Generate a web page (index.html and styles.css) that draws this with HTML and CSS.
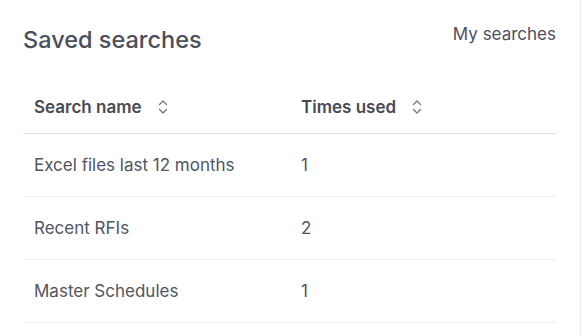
FILE: index.html
```html
<!DOCTYPE html>
<html lang="en">
<head>
<meta charset="utf-8">
<link rel="stylesheet" href="styles.css">
</head>
<body>
<div class="panel">
  <div class="head">
    <h1 class="title">Saved searches</h1>
    <a class="link">My searches</a>
  </div>
  <table class="tbl">
    <thead>
      <tr>
        <th class="c1"><span class="th-in">Search name<svg class="sort" width="10" height="16" viewBox="0 0 10 16"><path d="M1.5 5.5 L5 2 L8.5 5.5 M1.5 10.5 L5 14 L8.5 10.5" fill="none" stroke="#6b7280" stroke-width="1.2" stroke-linecap="round" stroke-linejoin="round"/></svg></span></th>
        <th class="c2"><span class="th-in">Times used<svg class="sort" width="10" height="16" viewBox="0 0 10 16"><path d="M1.5 5.5 L5 2 L8.5 5.5 M1.5 10.5 L5 14 L8.5 10.5" fill="none" stroke="#6b7280" stroke-width="1.2" stroke-linecap="round" stroke-linejoin="round"/></svg></span></th>
      </tr>
    </thead>
    <tbody>
      <tr><td>Excel files last 12 months</td><td>1</td></tr>
      <tr><td>Recent RFIs</td><td>2</td></tr>
      <tr><td>Master Schedules</td><td>1</td></tr>
    </tbody>
  </table>
</div>
</body>
</html>
```
FILE: styles.css
```css
html, body {
  margin: 0;
  padding: 0;
  background: #fff;
}
body {
  font-family: Inter, "Liberation Sans", sans-serif;
  color: #4b505a;
}
.panel {
  width: 581px;
  height: 336px;
  box-sizing: border-box;
  border-right: 1px solid #ececee;
  padding: 0 24px 0 23px;
}
.head {
  display: flex;
  justify-content: space-between;
  align-items: flex-start;
  height: 80px;
}
.title {
  margin: 25px 0 0 0;
  font-size: 23.5px;
  font-weight: 500;
  line-height: 30px;
  color: #4a4f5b;
}
.link {
  margin-top: 23px;
  font-size: 17px;
  line-height: 22px;
  color: #4b5060;
}
.tbl {
  width: 100%;
  border-collapse: collapse;
}
.tbl th {
  text-align: left;
  font-size: 17px;
  font-weight: 600;
  color: #464b55;
  padding: 0 11px;
  height: 53px;
  vertical-align: middle;
  border-bottom: 1px solid #dcdde0;
}
.th-in {
  display: inline-flex;
  align-items: center;
  gap: 16px;
}
.c1 { width: 245px; }
.tbl td {
  font-size: 17px;
  color: #50555f;
  padding: 0 11px;
  height: 62px;
  border-bottom: 1px solid #f0f0f2;
  vertical-align: middle;
}
```
